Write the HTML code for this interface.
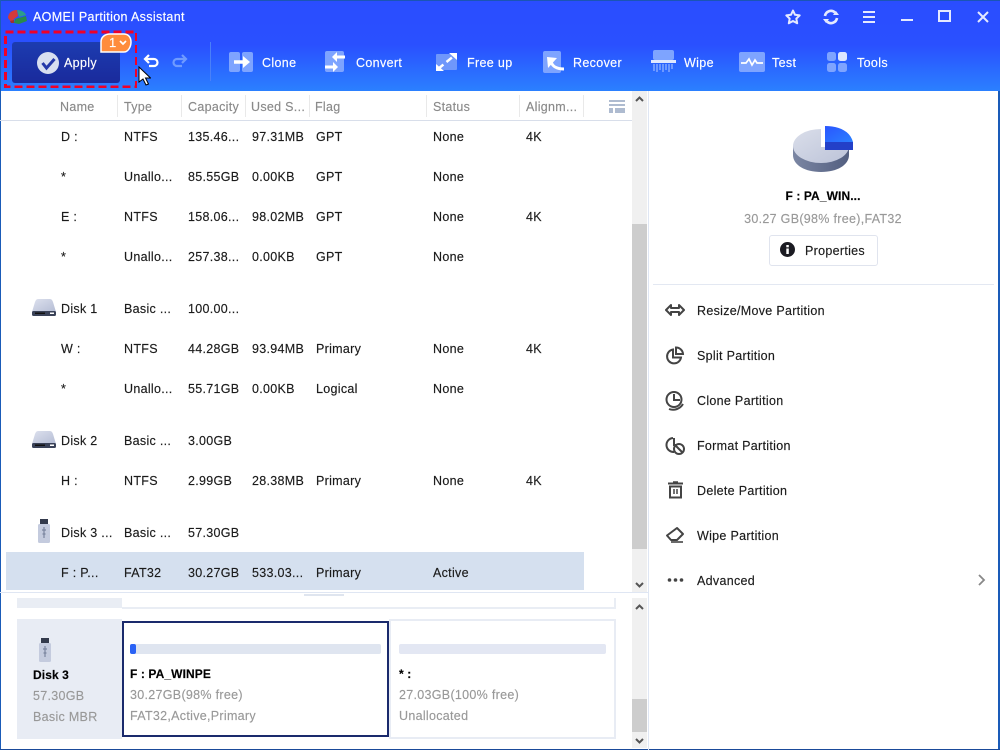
<!DOCTYPE html>
<html><head><meta charset="utf-8"><style>
html,body{margin:0;padding:0}
#w{position:relative;width:1000px;height:750px;overflow:hidden;background:#fff;font-family:"Liberation Sans",sans-serif;font-size:12.5px;letter-spacing:.3px;color:#1b1b1b;-webkit-text-stroke:.15px}
#w div,#w svg{position:absolute}
.t{line-height:16px;height:16px;white-space:nowrap}
.h{color:#8a8a8a}
.g{color:#999}
.b{font-weight:bold;color:#000;letter-spacing:.1px;font-size:12px}
.wt{color:#fff;letter-spacing:.35px}
.s{top:95px;width:1px;height:22px;background:#e9e9e9}
</style></head><body><div id="w">
<div style="left:0;top:0;width:1000px;height:91px;background:linear-gradient(#2a4dff 0,#2a50ff 45px,#2b80ff 91px)"></div>
<div style="left:0;top:0;width:1000px;height:1px;background:#1a55b5"></div>
<div style="left:0;top:0;width:1px;height:750px;background:#1a5bb8"></div>
<div style="left:998px;top:91px;width:2px;height:659px;background:#1a5bb8"></div>
<div style="left:0;top:749px;width:1000px;height:1px;background:#1a4a9a"></div>

<svg style="left:7px;top:9px" width="22" height="16" viewBox="0 0 22 16"><path d="M1 9C1 4 5 1 10 1l1 6-4 3-2 4z" fill="#d23a3a"/><path d="M10 1c4 0 8 2 9 5l-7 2z" fill="#2c9c8c"/><path d="M8 10l11-3 1 5-8 3-5-1z" fill="#2a8a4a"/><path d="M3 12l4-1 0 3-3 0z" fill="#a03030"/></svg>
<div class="t wt" style="left:33px;top:9px">AOMEI Partition Assistant</div>

<svg style="left:784px;top:8px" width="18" height="18" viewBox="0 0 18 18"><path d="M9 2.500l2 4.300 4.700.6-3.400 3.200.9 4.700L9 13l-4.200 2.300.9-4.700L2.300 7.400 7 6.800z" fill="none" stroke="#e4e9ff" stroke-width="2" stroke-linejoin="round"/></svg>
<svg style="left:822px;top:8px" width="18" height="18" viewBox="0 0 18 18"><path d="M3 8a6 6 0 0 1 10-3.500M15 10a6 6 0 0 1-10 3.500" fill="none" stroke="#e4e9ff" stroke-width="2.600"/><path d="M11 7h6l-3-4zM7 11H1l3 4z" fill="#e4e9ff"/></svg>
<svg style="left:860px;top:8px" width="18" height="18" viewBox="0 0 18 18"><path d="M3 4h12M3 9h12M3 14h12" stroke="#e4e9ff" stroke-width="2"/></svg>
<svg style="left:898px;top:8px" width="18" height="18" viewBox="0 0 18 18"><path d="M3 12h12" stroke="#e4e9ff" stroke-width="2"/></svg>
<svg style="left:936px;top:8px" width="18" height="18" viewBox="0 0 18 18"><rect x="3" y="3" width="11" height="10" fill="none" stroke="#e4e9ff" stroke-width="2"/></svg>
<svg style="left:974px;top:8px" width="18" height="18" viewBox="0 0 18 18"><path d="M4 4l10 10M14 4L4 14" stroke="#e4e9ff" stroke-width="2"/></svg>

<div style="left:12px;top:42px;width:108px;height:41px;border-radius:3px;background:linear-gradient(#1c3cb0,#1a2a9c)"></div>
<svg style="left:3px;top:30px" width="134" height="58"><rect x="2.500" y="2" width="131" height="55" fill="none" stroke="#f00028" stroke-width="3" stroke-dasharray="8 4"/></svg>
<svg style="left:37px;top:51px" width="23" height="23" viewBox="0 0 23 23"><circle cx="11" cy="12" r="11" fill="#d8dff0"/><path d="M5.500 12l4 5 8-9" fill="none" stroke="#2438a8" stroke-width="3"/></svg>
<div class="t wt" style="left:64px;top:55px">Apply</div>
<svg style="left:99px;top:32px" width="34" height="22" viewBox="0 0 34 22"><path d="M2 20V10C2 5 6 2 11 2h14c4 0 7 3 7 8s-3 10-7 10z" fill="#ff8c3c" stroke="#fff" stroke-width="1.500"/></svg>
<div class="t wt" style="left:109px;top:35px;font-size:13px">1</div>
<svg style="left:119px;top:40px" width="8" height="6"><path d="M1 1l3 3 3-3" fill="none" stroke="#fff" stroke-width="1.700"/></svg>
<svg style="left:143px;top:54px" width="18" height="16" viewBox="0 0 18 16"><path d="M3 5h8a3.500 3.500 0 0 1 0 7H6" fill="none" stroke="#fff" stroke-width="2.200"/><path d="M6 1L2 5l4 4" fill="none" stroke="#fff" stroke-width="2.200"/></svg>
<svg style="left:170px;top:54px" width="18" height="16" viewBox="0 0 18 16"><path d="M15 5H7a3.500 3.500 0 0 0 0 7h5" fill="none" stroke="#6f9bff" stroke-width="2.200"/><path d="M12 1l4 4-4 4" fill="none" stroke="#6f9bff" stroke-width="2.200"/></svg>
<svg style="left:138px;top:66px" width="13" height="20" viewBox="0 0 13 20"><path d="M1 1v15l4-3 3 6 2.500-1-3-6h5z" fill="#fff" stroke="#000"/></svg>
<div style="left:210px;top:42px;width:1px;height:39px;background:#4a80f8"></div>

<svg style="left:229px;top:52px" width="25" height="21" viewBox="0 0 25 21"><rect x="0" y="0" width="11" height="20" rx="2" fill="#7ea4ff"/><rect x="13" y="0" width="11" height="20" rx="2" fill="#7ea4ff"/><path d="M5 10h11" stroke="#fff" stroke-width="3.500"/><path d="M14 4l7 6-7 6z" fill="#fff"/></svg>
<div class="t wt" style="left:262px;top:55px">Clone</div>
<svg style="left:325px;top:51px" width="21" height="22" viewBox="0 0 21 22"><rect x="0" y="0" width="19" height="21" rx="2" fill="#7ea4ff"/><path d="M11 6h9" stroke="#fff" stroke-width="3"/><path d="M12 1L7 6l5 5z" fill="#fff"/><path d="M0 16h9" stroke="#fff" stroke-width="3"/><path d="M8 11l5 5-5 5z" fill="#fff"/></svg>
<div class="t wt" style="left:356px;top:55px">Convert</div>
<svg style="left:435px;top:52px" width="23" height="20" viewBox="0 0 23 20"><rect x="1" y="2" width="21" height="16" rx="1" fill="#6f97fb"/><path d="M3 17L20 3" stroke="#fff" stroke-width="2.500" stroke-dasharray="7 4"/><path d="M14 1h8v7zM9 19H1v-7z" fill="#fff"/></svg>
<div class="t wt" style="left:467px;top:55px">Free up</div>
<svg style="left:543px;top:51px" width="22" height="22" viewBox="0 0 22 22"><rect x="0" y="0" width="18" height="22" rx="2" fill="#7ea4ff"/><path d="M8 11c2 5 6 7 13 7" fill="none" stroke="#fff" stroke-width="3"/><path d="M4 6l10 1-9 10z" fill="#fff"/></svg>
<div class="t wt" style="left:573px;top:55px">Recover</div>
<svg style="left:651px;top:50px" width="25" height="23" viewBox="0 0 25 23"><rect x="2" y="0" width="21" height="10" rx="2" fill="#7ea4ff"/><rect x="0" y="10" width="25" height="3" fill="#dfe8ff"/><path d="M3 14v7M6 14v8M9 14v6M12 14v8M15 14v6M18 14v8M21 14v5" stroke="#7ea4ff" stroke-width="1.600"/></svg>
<div class="t wt" style="left:684px;top:55px">Wipe</div>
<svg style="left:739px;top:52px" width="26" height="20" viewBox="0 0 26 20"><rect width="26" height="20" rx="2" fill="#7ea4ff"/><path d="M2 11h5l3-4 3 6 3-5 2 3h6" fill="none" stroke="#fff" stroke-width="1.700"/></svg>
<div class="t wt" style="left:772px;top:55px">Test</div>
<svg style="left:827px;top:52px" width="21" height="21" viewBox="0 0 21 21"><rect x="0" y="0" width="9" height="9" rx="2.500" fill="#7ea4ff"/><rect x="11" y="0" width="9" height="9" rx="2.500" fill="#dbe5ff"/><rect x="0" y="11" width="9" height="9" rx="2.500" fill="#7ea4ff"/><rect x="11" y="11" width="9" height="9" rx="2.500" fill="#7ea4ff"/></svg>
<div class="t wt" style="left:857px;top:55px">Tools</div>

<div class="t h" style="left:60px;top:99px">Name</div><div class="s" style="left:117px"></div>
<div class="t h" style="left:124px;top:99px">Type</div><div class="s" style="left:181px"></div>
<div class="t h" style="left:188px;top:99px">Capacity</div><div class="s" style="left:245px"></div>
<div class="t h" style="left:251px;top:99px">Used S...</div><div class="s" style="left:309px"></div>
<div class="t h" style="left:315px;top:99px">Flag</div><div class="s" style="left:426px"></div>
<div class="t h" style="left:433px;top:99px">Status</div><div class="s" style="left:519px"></div>
<div class="t h" style="left:526px;top:99px">Alignm...</div><div class="s" style="left:583px"></div>
<svg style="left:609px;top:100px" width="16" height="13"><path d="M0 0h16v2H0zM0 4h16v2H0zM0 8h4v5H0zM6 8h10v5H6z" fill="#aebbd0"/></svg>
<div style="left:0;top:120px;width:632px;height:1px;background:#d8deea"></div>

<div style="left:6px;top:552px;width:578px;height:38px;background:#d5e0ef"></div>

<div class="t" style="left:61px;top:129px">D :</div><div class="t" style="left:124px;top:129px">NTFS</div><div class="t" style="left:188px;top:129px">135.46...</div><div class="t" style="left:252px;top:129px">97.31MB</div><div class="t" style="left:316px;top:129px">GPT</div><div class="t" style="left:433px;top:129px">None</div><div class="t" style="left:526px;top:129px">4K</div>
<div class="t" style="left:61px;top:169px">*</div><div class="t" style="left:124px;top:169px">Unallo...</div><div class="t" style="left:188px;top:169px">85.55GB</div><div class="t" style="left:252px;top:169px">0.00KB</div><div class="t" style="left:316px;top:169px">GPT</div><div class="t" style="left:433px;top:169px">None</div>
<div class="t" style="left:61px;top:209px">E :</div><div class="t" style="left:124px;top:209px">NTFS</div><div class="t" style="left:188px;top:209px">158.06...</div><div class="t" style="left:252px;top:209px">98.02MB</div><div class="t" style="left:316px;top:209px">GPT</div><div class="t" style="left:433px;top:209px">None</div><div class="t" style="left:526px;top:209px">4K</div>
<div class="t" style="left:61px;top:249px">*</div><div class="t" style="left:124px;top:249px">Unallo...</div><div class="t" style="left:188px;top:249px">257.38...</div><div class="t" style="left:252px;top:249px">0.00KB</div><div class="t" style="left:316px;top:249px">GPT</div><div class="t" style="left:433px;top:249px">None</div>

<svg style="left:32px;top:299px" width="24" height="18" viewBox="0 0 24 18"><defs><linearGradient id="dk" x1="0" y1="0" x2="1" y2="1"><stop offset="0" stop-color="#dde1ee"/><stop offset="1" stop-color="#b4bcd4"/></linearGradient></defs><path d="M6 0h12q2 0 3 3l3 10H0L3 3q1-3 3-3z" fill="url(#dk)"/><rect x="0" y="12" width="24" height="5" rx="1.500" fill="#3a4258"/><rect x="3" y="13.500" width="10" height="1.500" fill="#111"/><rect x="18" y="13.500" width="4" height="1.500" fill="#fff"/></svg>
<div class="t" style="left:61px;top:301px">Disk 1</div><div class="t" style="left:124px;top:301px">Basic ...</div><div class="t" style="left:188px;top:301px">100.00...</div>
<div class="t" style="left:61px;top:341px">W :</div><div class="t" style="left:124px;top:341px">NTFS</div><div class="t" style="left:188px;top:341px">44.28GB</div><div class="t" style="left:252px;top:341px">93.94MB</div><div class="t" style="left:316px;top:341px">Primary</div><div class="t" style="left:433px;top:341px">None</div><div class="t" style="left:526px;top:341px">4K</div>
<div class="t" style="left:61px;top:381px">*</div><div class="t" style="left:124px;top:381px">Unallo...</div><div class="t" style="left:188px;top:381px">55.71GB</div><div class="t" style="left:252px;top:381px">0.00KB</div><div class="t" style="left:316px;top:381px">Logical</div><div class="t" style="left:433px;top:381px">None</div>

<svg style="left:32px;top:431px" width="24" height="18" viewBox="0 0 24 18"><path d="M6 0h12q2 0 3 3l3 10H0L3 3q1-3 3-3z" fill="url(#dk)"/><rect x="0" y="12" width="24" height="5" rx="1.500" fill="#3a4258"/><rect x="3" y="13.500" width="10" height="1.500" fill="#111"/><rect x="18" y="13.500" width="4" height="1.500" fill="#fff"/></svg>
<div class="t" style="left:61px;top:433px">Disk 2</div><div class="t" style="left:124px;top:433px">Basic ...</div><div class="t" style="left:188px;top:433px">3.00GB</div>
<div class="t" style="left:61px;top:473px">H :</div><div class="t" style="left:124px;top:473px">NTFS</div><div class="t" style="left:188px;top:473px">2.99GB</div><div class="t" style="left:252px;top:473px">28.38MB</div><div class="t" style="left:316px;top:473px">Primary</div><div class="t" style="left:433px;top:473px">None</div><div class="t" style="left:526px;top:473px">4K</div>

<svg style="left:38px;top:519px" width="12" height="25" viewBox="0 0 12 25"><rect x="2" y="0" width="8" height="6" fill="#333a4c"/><rect x="0" y="5" width="12" height="19" rx="1.500" fill="#c4cbde"/><path d="M6 8v11M4 11h4M4.500 15h3" stroke="#7a859f" stroke-width="1.200"/></svg>
<div class="t" style="left:61px;top:525px">Disk 3 ...</div><div class="t" style="left:124px;top:525px">Basic ...</div><div class="t" style="left:188px;top:525px">57.30GB</div>
<div class="t" style="left:61px;top:565px">F : P...</div><div class="t" style="left:124px;top:565px">FAT32</div><div class="t" style="left:188px;top:565px">30.27GB</div><div class="t" style="left:252px;top:565px">533.03...</div><div class="t" style="left:316px;top:565px">Primary</div><div class="t" style="left:433px;top:565px">Active</div>

<div style="left:632px;top:91px;width:15px;height:501px;background:#f0f0f0"></div>
<div style="left:632px;top:224px;width:15px;height:325px;background:#cdcdcd"></div>
<div style="left:648px;top:91px;width:1px;height:659px;background:#dfe6f3"></div>
<svg style="left:635px;top:96px" width="9" height="7"><path d="M1 5l3.500-3.500L8 5" fill="none" stroke="#555" stroke-width="2"/></svg>
<svg style="left:635px;top:581px" width="9" height="7"><path d="M1 2l3.500 3.500L8 2" fill="none" stroke="#555" stroke-width="2"/></svg>
<div style="left:0;top:592px;width:648px;height:1px;background:#dfe6f3"></div>
<div style="left:304px;top:594px;width:40px;height:2px;background:#dfe5ef"></div>

<div style="left:17px;top:598px;width:105px;height:10px;background:#e9edf4"></div>
<div style="left:122px;top:607px;width:494px;height:2px;background:#e9edf4"></div>
<div style="left:614px;top:598px;width:2px;height:10px;background:#e9edf4"></div>

<div style="left:17px;top:619px;width:105px;height:120px;background:#e8ecf4"></div>
<svg style="left:39px;top:638px" width="12" height="25" viewBox="0 0 12 25"><rect x="2" y="0" width="8" height="5" fill="#333a4c"/><rect x="0" y="5" width="12" height="19" rx="1.500" fill="#c4cbde"/><path d="M6 8v11M4 11h4M4.500 15h3" stroke="#7a859f" stroke-width="1.200"/></svg>
<div class="t b" style="left:33px;top:667px">Disk 3</div>
<div class="t g" style="left:33px;top:688px">57.30GB</div>
<div class="t g" style="left:33px;top:709px">Basic MBR</div>

<div style="left:389px;top:619px;width:223px;height:116px;border:2px solid #e8ecf4"></div>
<div style="left:122px;top:621px;width:263px;height:112px;border:2px solid #1a2a6c"></div>
<div style="left:130px;top:644px;width:251px;height:10px;border-radius:2px;background:#dfe5f0"></div>
<div style="left:130px;top:644px;width:6px;height:10px;border-radius:2px;background:#2a62f5"></div>
<div class="t b" style="left:130px;top:666px">F : PA_WINPE</div>
<div class="t g" style="left:130px;top:687px">30.27GB(98% free)</div>
<div class="t g" style="left:130px;top:708px">FAT32,Active,Primary</div>
<div style="left:399px;top:644px;width:207px;height:10px;border-radius:2px;background:#e3e7f3"></div>
<div class="t b" style="left:399px;top:666px">* :</div>
<div class="t g" style="left:399px;top:687px">27.03GB(100% free)</div>
<div class="t g" style="left:399px;top:708px">Unallocated</div>

<div style="left:632px;top:598px;width:15px;height:150px;background:#f0f0f0"></div>
<div style="left:632px;top:699px;width:15px;height:33px;background:#cdcdcd"></div>
<svg style="left:635px;top:604px" width="9" height="7"><path d="M1 5l3.500-3.500L8 5" fill="none" stroke="#555" stroke-width="2"/></svg>
<svg style="left:635px;top:737px" width="9" height="7"><path d="M1 2l3.500 3.500L8 2" fill="none" stroke="#555" stroke-width="2"/></svg>

<svg style="left:790px;top:122px" width="66" height="54" viewBox="790 122 66 54"><defs><linearGradient id="pt" x1="0" y1="0" x2="1" y2="1"><stop offset="0" stop-color="#dadeea"/><stop offset="1" stop-color="#bcc3d8"/></linearGradient><linearGradient id="ps" x1="0" y1="0" x2="1" y2="0"><stop offset="0" stop-color="#7b86a3"/><stop offset="1" stop-color="#535f80"/></linearGradient><linearGradient id="pb" x1="0" y1="0" x2="1" y2="1"><stop offset="0" stop-color="#2a55ff"/><stop offset="1" stop-color="#2a80ff"/></linearGradient></defs>
<path d="M793 146v9c0 10 12 17 28 17s28-7 28-17v-9z" fill="url(#ps)"/>
<ellipse cx="821" cy="146" rx="28" ry="17" fill="url(#pt)"/>
<rect x="821" y="122" width="35" height="25" fill="#fff"/>
<path d="M825 142h28v8h-28z" fill="#2340c8"/>
<path d="M825 126c14 0 25 5 28 16h-28z" fill="url(#pb)"/></svg>
<div class="t b" style="left:723px;top:188px;width:200px;text-align:center">F : PA_WIN...</div>
<div class="t g" style="left:723px;top:211px;width:200px;text-align:center">30.27 GB(98% free),FAT32</div>
<div style="left:769px;top:235px;width:107px;height:29px;border:1px solid #e0e4ee;border-radius:3px"></div>
<svg style="left:780px;top:242px" width="15" height="15"><circle cx="7.500" cy="7.500" r="7.500" fill="#1b1b22"/><rect x="6.300" y="6.500" width="2.500" height="5.500" fill="#fff"/><rect x="6.300" y="3" width="2.500" height="2.300" fill="#fff"/></svg>
<div class="t" style="left:805px;top:243px">Properties</div>
<div style="left:653px;top:284px;width:341px;height:1px;background:#e3e8f2"></div>

<svg style="left:665px;top:302px" width="20" height="16" viewBox="0 0 20 16"><path d="M1 8l5-5v3h8V3l5 5-5 5v-3H6v3z" fill="none" stroke="#444" stroke-width="2" stroke-linejoin="round"/></svg>
<div class="t" style="left:697px;top:303px">Resize/Move Partition</div>
<svg style="left:665px;top:346px" width="20" height="20" viewBox="0 0 20 20"><path d="M8 3.500a7 7 0 1 0 8 8H8z" fill="none" stroke="#444" stroke-width="2"/><path d="M11 1.500a7 7 0 0 1 7 6.500h-7z" fill="none" stroke="#444" stroke-width="2"/></svg>
<div class="t" style="left:697px;top:348px">Split Partition</div>
<svg style="left:665px;top:391px" width="20" height="20" viewBox="0 0 20 20"><circle cx="9" cy="8.500" r="7.500" fill="none" stroke="#444" stroke-width="2"/><path d="M9 3v6h6" fill="none" stroke="#444" stroke-width="2"/><path d="M4 18c5 2 11 0 14-5" fill="none" stroke="#444" stroke-width="2"/></svg>
<div class="t" style="left:697px;top:393px">Clone Partition</div>
<svg style="left:665px;top:436px" width="20" height="20" viewBox="0 0 20 20"><path d="M8 2a7 7 0 1 0 1 14M9 2v7h7" fill="none" stroke="#444" stroke-width="2"/><circle cx="14" cy="13" r="5" fill="#fff" stroke="#444" stroke-width="2"/><path d="M11 10l6 6" stroke="#444" stroke-width="2"/></svg>
<div class="t" style="left:697px;top:438px">Format Partition</div>
<svg style="left:667px;top:481px" width="17" height="18" viewBox="0 0 17 18"><path d="M1 2.500h15" stroke="#444" stroke-width="2"/><path d="M6 1h5" stroke="#444" stroke-width="1.500"/><path d="M3 5.500V16.500h11V5.500z" fill="none" stroke="#444" stroke-width="2"/><path d="M7 8v5M10 8v5" stroke="#444" stroke-width="1.500"/></svg>
<div class="t" style="left:697px;top:483px">Delete Partition</div>
<svg style="left:665px;top:526px" width="20" height="18" viewBox="0 0 20 18"><path d="M12 2l6 6-6 6H6L2 9.500z" fill="none" stroke="#444" stroke-width="2" stroke-linejoin="round"/><path d="M6 16h12" stroke="#444" stroke-width="1.600"/></svg>
<div class="t" style="left:697px;top:528px">Wipe Partition</div>
<svg style="left:667px;top:577px" width="17" height="6"><circle cx="2.500" cy="3" r="1.800" fill="#444"/><circle cx="8.500" cy="3" r="1.800" fill="#444"/><circle cx="14.500" cy="3" r="1.800" fill="#444"/></svg>
<div class="t" style="left:697px;top:573px">Advanced</div>
<svg style="left:977px;top:574px" width="9" height="12"><path d="M2 1l5 5-5 5" fill="none" stroke="#888" stroke-width="1.800"/></svg>
</div></body></html>
